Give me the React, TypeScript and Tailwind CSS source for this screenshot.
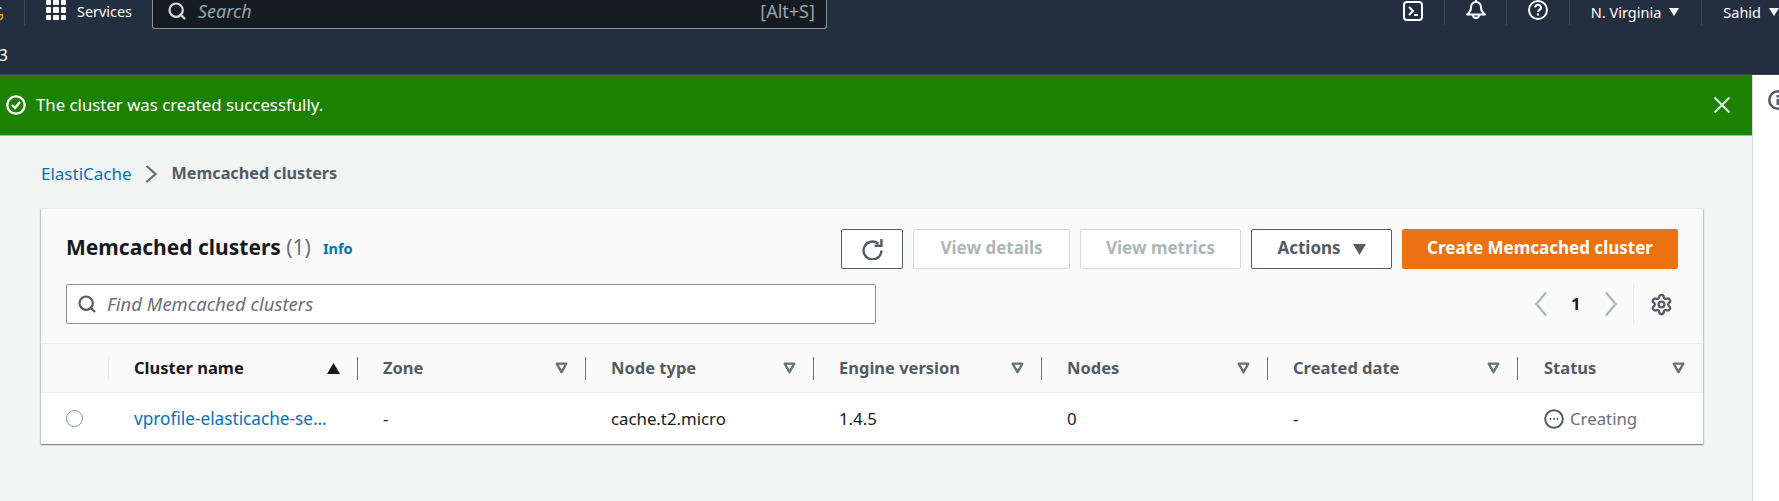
import React from "react";
import { Search, Settings } from "lucide-react";

const Caret = ({ className = "" }: { className?: string }) => (
  <svg viewBox="0 0 10 8" className={`w-[10px] h-[8px] shrink-0 ${className}`} preserveAspectRatio="none">
    <path d="M0 0h10L5 8z" fill="currentColor" />
  </svg>
);

const Filter = () => (
  <svg viewBox="0 0 14 12" className="w-[13px] h-[12px] shrink-0 text-[#687078]">
    <path d="M1.800 1.300h10.400L7 10.500z" fill="none" stroke="currentColor" strokeWidth="2.500" strokeLinejoin="round" />
  </svg>
);

const NavSep = () => <div className="w-px h-[25px] bg-[#414750]" />;

const columns = ["Zone", "Node type", "Engine version", "Nodes", "Created date"];
const cols = "grid-cols-[68px_249px_228px_228px_228px_226px_250px_1fr]";

export default function App() {
  return (
    <div className="w-[1779px] h-[501px] overflow-hidden flex flex-col bg-[#f2f3f3] text-[16.800px] text-[#16191f] font-['Noto_Sans',sans-serif]">
      <header className="h-[75px] shrink-0 bg-[#232f3e] border-b border-[#414750] text-white">
        <div className="h-[29px] flex items-start">
          <div className="w-[25px] h-[25px] border-r border-[#414750] shrink-0">
            <svg viewBox="0 0 4 24" className="w-[4px] h-[24px]" fill="none" strokeWidth="1.500">
              <path d="M0 8h1.500" stroke="#ffffff" />
              <path d="M0 14.800h3M0 19.500c1.600 0 2.600-1.200 2.600-4.500" stroke="#ff9900" />
            </svg>
          </div>
          <div className="ml-[21px] w-[20px] h-[20px] grid grid-cols-3 gap-[2px] shrink-0">
            {Array.from({ length: 9 }).map((_, i) => (
              <span key={i} className="bg-white rounded-[1px]" />
            ))}
          </div>
          <span className="ml-[11px] text-[14.400px] leading-[24px]">Services</span>
          <div className="ml-[20px] w-[675px] h-[29px] bg-[#161b22] border border-t-0 border-[#879596] rounded-b-[3px] flex items-center pl-[14px] pr-[11px] pb-[6px]">
            <Search className="w-[20px] h-[20px] text-[#d5dbdb] shrink-0" strokeWidth={2.600} />
            <span className="ml-[11px] italic text-[#95a5a6] text-[18px]">Search</span>
            <span className="ml-auto text-[#95a5a6] text-[18px]">[Alt+S]</span>
          </div>
          <div className="ml-auto flex items-start">
            <svg viewBox="0 0 20 20" className="w-[20px] h-[20px] mt-[1px] mr-[21px]" fill="none" stroke="white" strokeWidth="2">
              <rect x="1" y="1" width="18" height="18" rx="3" />
              <path d="M6 6l4 4-4 4M11 14h4" />
            </svg>
            <NavSep />
            <svg viewBox="0 0 20 20" className="w-[20px] h-[20px] ml-[21px] mr-[20px]" fill="none" stroke="white" strokeWidth="2" strokeLinejoin="round">
              <path d="M10 0v2M10 2c-3.200 0-5 2.500-5 5.500 0 2.500-1.200 4.800-4 7h18c-2.800-2.200-4-4.500-4-7C15 4.500 13.200 2 10 2z" />
              <path d="M7 15a3 3 0 0 0 6 0" />
            </svg>
            <NavSep />
            <svg viewBox="0 0 20 20" className="w-[20px] h-[20px] ml-[21px] mr-[21px]" fill="none" stroke="white" strokeWidth="2">
              <circle cx="10" cy="10" r="9" />
              <path d="M7.300 7.500a2.800 2.800 0 1 1 4.200 2.400c-1 .6-1.500 1-1.500 2.100" />
              <path d="M10 13.500v2" />
            </svg>
            <NavSep />
            <span className="ml-[21px] text-[14.500px] leading-[24px]">N. Virginia</span>
            <Caret className="ml-[8px] mt-[8px]" />
            <div className="ml-[22px]"><NavSep /></div>
            <span className="ml-[21px] text-[14.500px] leading-[24px]">Sahid</span>
            <Caret className="ml-[8px] mt-[8px]" />
          </div>
        </div>
        <div className="text-[16px] leading-[20px] mt-[16px] w-[8px] overflow-hidden flex justify-end">3</div>
      </header>

      <div className="flex-1 flex min-h-0">
        <main className="w-[1752px] shrink-0 flex flex-col">
          <div className="h-[61px] shrink-0 bg-[#1d8102] border-b border-[#a9b2b2] flex items-center text-white pl-[6px] pr-[21px]">
            <svg viewBox="0 0 20 20" className="w-[20px] h-[20px]" fill="none" stroke="white" strokeWidth="2.300">
              <circle cx="10" cy="10" r="8.700" />
              <path d="M6 10l3 3 5-6" />
            </svg>
            <span className="ml-[10px]">The cluster was created successfully.</span>
            <svg viewBox="0 0 18 18" className="ml-auto w-[18px] h-[18px] text-[#e3e7e7]" fill="none" stroke="currentColor" strokeWidth="2">
              <path d="M1.500 1.500l15 15M16.500 1.500l-15 15" />
            </svg>
          </div>

          <nav className="h-[72px] shrink-0 flex items-center pl-[41px] pt-[3px]">
            <span className="text-[#0073bb] text-[17px]">ElastiCache</span>
            <svg viewBox="0 0 12 18" className="w-[12px] h-[20px] ml-[13px] mr-[15px] text-[#687078]" fill="none" stroke="currentColor" strokeWidth="2.200">
              <path d="M1.500 1l9 8-9 8" />
            </svg>
            <span className="text-[#545b64] font-bold text-[16.200px]">Memcached clusters</span>
          </nav>

          <section className="ml-[41px] w-[1662px] h-[236px] bg-white border-t border-[#eaeded] shadow-[0_1px_1px_0_rgba(0,28,36,0.3),1px_1px_1px_0_rgba(0,28,36,0.15),-1px_1px_1px_0_rgba(0,28,36,0.15)] flex flex-col">
            <div className="h-[135px] shrink-0 bg-[#fafafa] border-b border-[#eaeded] pl-[25px] pr-[25px] pt-[20px]">
              <div className="flex items-center h-[40px]">
                <h1 className="text-[21px] font-bold text-[#16191f] pb-[3px]">
                  Memcached clusters <span className="font-normal text-[#687078]">(1)</span>
                </h1>
                <span className="ml-[12px] text-[14.500px] font-bold text-[#0073bb]">Info</span>
                <div className="ml-auto flex gap-[10px] font-bold text-[17px]">
                  <button className="w-[62px] h-[40px] bg-white border border-[#545b64] rounded-[2px] flex items-center justify-center">
                    <svg viewBox="0 0 20 20" className="w-[21px] h-[21px] text-[#545b64]" fill="none" stroke="currentColor" strokeWidth="2.300">
                      <path d="M15.500 4.500A8.500 8.500 0 1 0 18.500 11" />
                      <path d="M12 6.500h6.500V0" />
                    </svg>
                  </button>
                  <button className="w-[157px] h-[40px] bg-white border border-[#d5dbdb] rounded-[2px] text-[#aab7b8] pb-[2px]">View details</button>
                  <button className="w-[161px] h-[40px] bg-white border border-[#d5dbdb] rounded-[2px] text-[#aab7b8] pb-[2px]">View metrics</button>
                  <button className="w-[141px] h-[40px] bg-white border border-[#545b64] rounded-[2px] text-[#545b64] flex items-center justify-center gap-[12px] pb-[2px]">
                    Actions <Caret className="w-[13px] h-[11px] mt-[2px]" />
                  </button>
                  <button className="w-[276px] h-[40px] bg-[#ec7211] rounded-[2px] text-white pb-[2px]">Create Memcached cluster</button>
                </div>
              </div>
              <div className="flex items-center h-[40px] mt-[15px]">
                <div className="w-[810px] h-[40px] bg-white border border-[#879596] rounded-[2px] flex items-center pl-[10px]">
                  <Search className="w-[20px] h-[20px] text-[#545b64] shrink-0" strokeWidth={2.600} />
                  <span className="ml-[10px] italic text-[#687078] text-[18.500px]">Find Memcached clusters</span>
                </div>
                <div className="ml-auto flex items-center h-[40px]">
                  <svg viewBox="0 0 12 26" className="w-[12px] h-[26px] text-[#aab7b8]" fill="none" stroke="currentColor" strokeWidth="2.200">
                    <path d="M11 1.500L1.500 13 11 24.500" />
                  </svg>
                  <span className="ml-[24px] mr-[26px] font-bold text-[#16191f] w-[8px]">1</span>
                  <svg viewBox="0 0 12 26" className="w-[12px] h-[26px] text-[#aab7b8]" fill="none" stroke="currentColor" strokeWidth="2.200">
                    <path d="M1 1.500L10.500 13 1 24.500" />
                  </svg>
                  <div className="ml-[16px] w-px h-[40px] bg-[#eaeded]" />
                  <Settings className="ml-[16px] mr-[5px] w-[23px] h-[23px] text-[#545b64]" strokeWidth={2.400} />
                </div>
              </div>
            </div>

            <div className={`h-[49px] shrink-0 bg-[#fafafa] border-b border-[#eaeded] grid ${cols} items-center font-bold text-[#545b64] text-[16.500px]`}>
              <div className="h-[23px] border-r border-[#eaeded]" />
              <div className="h-[23px] border-r border-[#687078] pl-[25px] pr-[17px] flex items-center justify-between text-[#16191f]">
                Cluster name <Caret className="w-[13px] h-[11px] rotate-180" />
              </div>
              {columns.map((c) => (
                <div key={c} className="h-[23px] border-r border-[#687078] pl-[25px] pr-[17px] flex items-center justify-between">
                  {c} <Filter />
                </div>
              ))}
              <div className="h-[23px] pl-[26px] pr-[18px] flex items-center justify-between">
                Status <Filter />
              </div>
            </div>

            <div className={`flex-1 grid ${cols} items-center`}>
              <div className="pl-[25px]">
                <div className="w-[17px] h-[17px] rounded-full border-[1.500px] border-[#879596] bg-white" />
              </div>
              <div className="pl-[25px] text-[#0073bb] text-[17.200px]">vprofile-elasticache-se…</div>
              <div className="pl-[25px]">-</div>
              <div className="pl-[25px]">cache.t2.micro</div>
              <div className="pl-[25px]">1.4.5</div>
              <div className="pl-[25px]">0</div>
              <div className="pl-[25px]">-</div>
              <div className="pl-[26px] flex items-center gap-[6px] text-[#687078]">
                <svg viewBox="0 0 20 20" className="w-[20px] h-[20px]" fill="none" stroke="#545b64" strokeWidth="2">
                  <circle cx="10" cy="10" r="8.800" />
                  <path d="M5.800 10h1.400M9.300 10h1.400M12.800 10h1.400" />
                </svg>
                Creating
              </div>
            </div>
          </section>
        </main>
        <aside className="flex-1 bg-white border-l border-[#d5dbdb] pl-[15px] pt-[15px] overflow-hidden">
          <svg viewBox="0 0 20 20" className="w-[20px] h-[20px] shrink-0 overflow-visible" fill="none" stroke="#545b64" strokeWidth="2.600">
            <circle cx="10" cy="10" r="8.700" />
            <path d="M10 9v6M10 5v2.500" strokeWidth="3" />
          </svg>
        </aside>
      </div>
    </div>
  );
}
